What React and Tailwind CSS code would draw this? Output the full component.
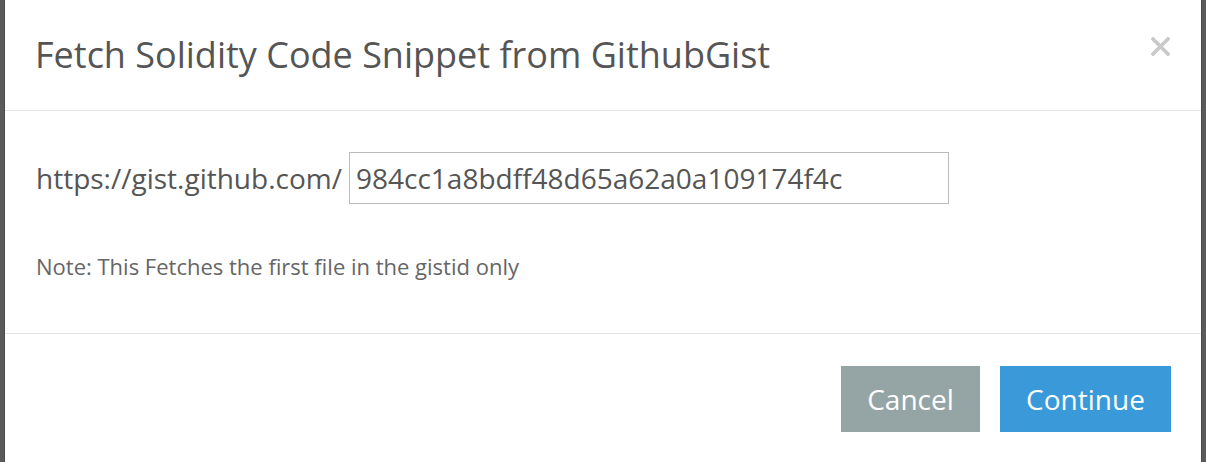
import { useState } from "react";

export default function App() {
  const [gistId, setGistId] = useState("984cc1a8bdff48d65a62a0a109174f4c");

  return (
    <div
      className="flex h-[462px] w-[1206px] overflow-hidden bg-[#5a5a5a]"
      style={{ fontFamily: '"Open Sans", sans-serif' }}
    >
      <div className="w-[5px] border-r border-[#4a4a4a]" />
      <div className="flex flex-1 flex-col bg-white">
        <header className="flex h-[111px] items-center justify-between border-b border-[#e5e5e5] pl-[30px] pr-[31px]">
          <h2 className="text-[36px] leading-none text-[#555]">
            Fetch Solidity Code Snippet from GithubGist
          </h2>
          <button className="-mt-[18px]" aria-label="Close">
            <svg width="19" height="19" viewBox="0 0 19 19">
              <path
                d="M2 2 L17 17 M17 2 L2 17"
                stroke="#c9c9c9"
                strokeWidth="3.6"
                strokeLinecap="square"
              />
            </svg>
          </button>
        </header>

        <main className="h-[223px] border-b border-[#e5e5e5] px-[31px] pt-[41px]">
          <div className="flex items-center gap-[7px]">
            <span className="text-[28px] text-[#555]">https://gist.github.com/</span>
            <input
              type="text"
              value={gistId}
              onChange={(e) => setGistId(e.target.value)}
              className="h-[52px] w-[600px] border border-[#bbb] px-[6px] text-[28px] text-[#555] outline-none"
            />
          </div>
          <p className="mt-[46px] text-[22px] text-[#666]">
            Note: This Fetches the first file in the gistid only
          </p>
        </main>

        <footer className="flex flex-1 justify-end gap-[20px] pr-[30px] pt-[32px]">
          <button className="h-[66px] w-[139px] bg-[#95a5a6] text-[28px] text-white">
            Cancel
          </button>
          <button className="h-[66px] w-[171px] bg-[#3a99d8] text-[28px] text-white">
            Continue
          </button>
        </footer>
      </div>
      <div className="w-[5px] border-l border-[#4a4a4a]" />
    </div>
  );
}
